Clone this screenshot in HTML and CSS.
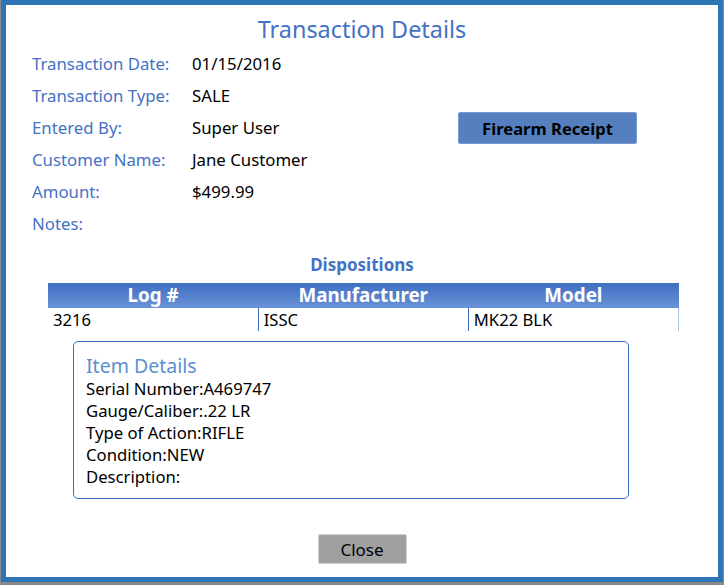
FILE: index.html
```html
<!DOCTYPE html>
<html lang="en">
<head>
    <meta charset="UTF-8">
    <title>Transaction Details</title>
    <link rel="stylesheet" href="styles.css">
</head>
<body>
    <div class="dialog">
        <h1 class="title">Transaction Details</h1>

        <div class="summary">
            <div class="fields">
                <div class="row"><span class="label">Transaction Date:</span><span class="value">01/15/2016</span></div>
                <div class="row"><span class="label">Transaction Type:</span><span class="value">SALE</span></div>
                <div class="row"><span class="label">Entered By:</span><span class="value">Super User</span></div>
                <div class="row"><span class="label">Customer Name:</span><span class="value">Jane Customer</span></div>
                <div class="row"><span class="label">Amount:</span><span class="value">$499.99</span></div>
                <div class="row"><span class="label">Notes:</span><span class="value"></span></div>
            </div>
            <button class="receipt-button">Firearm Receipt</button>
        </div>

        <h3 class="section-title">Dispositions</h3>
        <table class="grid">
            <thead>
                <tr><th>Log #</th><th>Manufacturer</th><th>Model</th></tr>
            </thead>
            <tbody>
                <tr><td>3216</td><td>ISSC</td><td>MK22 BLK</td></tr>
            </tbody>
        </table>

        <div class="item-details">
            <div class="item-title">Item Details</div>
            <div>Serial Number:A469747</div>
            <div>Gauge/Caliber:.22 LR</div>
            <div>Type of Action:RIFLE</div>
            <div>Condition:NEW</div>
            <div>Description:</div>
        </div>

        <div class="footer">
            <button class="close-button">Close</button>
        </div>
    </div>
</body>
</html>
```

FILE: styles.css
```css
body {
    margin: 0;
    background-color: #8a8a8a;
    font-family: "Noto Sans", "Open Sans", sans-serif;
    height: 585px;
    overflow: hidden;
}

/* Dialog frame */
.dialog {
    margin-left: 1px;
    width: 712px;
    height: 572px;
    border: 5px solid #2e75b6;
    background-color: #fff;
}

.title {
    margin: 0;
    padding-top: 9px;
    text-align: center;
    font-size: 23.4px;
    font-weight: normal;
    color: #4472c4;
    line-height: 30px;
}

/* Top fields */
.summary {
    display: flex;
    padding: 4px 0 0 26px;
}

.fields {
    width: 420px;
}

.row {
    display: flex;
    height: 32px;
    line-height: 32px;
    font-size: 16.8px;
}

.label {
    width: 160px;
    color: #4472c4;
}

.value {
    color: #000;
}

.receipt-button {
    margin-top: 64px;
    margin-left: 6px;
    width: 179px;
    height: 32px;
    background-color: #5580c0;
    border: 1px solid #7b9bd0;
    border-radius: 2px;
    font-family: inherit;
    font-size: 16.6px;
    font-weight: bold;
    color: #000;
    padding: 0;
}

/* Dispositions grid */
.section-title {
    margin: 14px 0 7px;
    text-align: center;
    font-size: 17px;
    color: #4472c4;
    line-height: 22px;
}

.grid {
    margin-left: 42px;
    width: 631px;
    border-collapse: collapse;
    font-size: 16.6px;
}

.grid th {
    width: 210px;
    height: 25px;
    padding: 0;
    background: linear-gradient(#3f6fc1, #6a93d7);
    color: #fff;
    font-size: 18.8px;
    font-weight: bold;
    line-height: 25px;
}

.grid td {
    height: 23px;
    padding: 0 0 0 5px;
    line-height: 23px;
    color: #000;
    border-left: 1px solid #3a6ab8;
}

.grid td:first-child {
    border-left: none;
}

.grid td:last-child {
    border-right: 1px solid #a9bfe3;
}

/* Item details box */
.item-details {
    margin: 10px 0 0 67px;
    width: 542px;
    height: 144px;
    padding: 12px 0 0 12px;
    border: 1px solid #3a6fc0;
    border-radius: 5px;
    font-size: 16.7px;
    line-height: 22px;
    color: #000;
}

.item-title {
    font-size: 19.5px;
    line-height: 24px;
    color: #5b8fd0;
}

.footer {
    text-align: center;
    margin-top: 35px;
}

.close-button {
    width: 89px;
    height: 30px;
    background-color: #a0a0a0;
    border: 1px solid #d0d0d0;
    border-radius: 2px;
    font-family: inherit;
    font-size: 17px;
    color: #000;
    padding: 0;
}
```
